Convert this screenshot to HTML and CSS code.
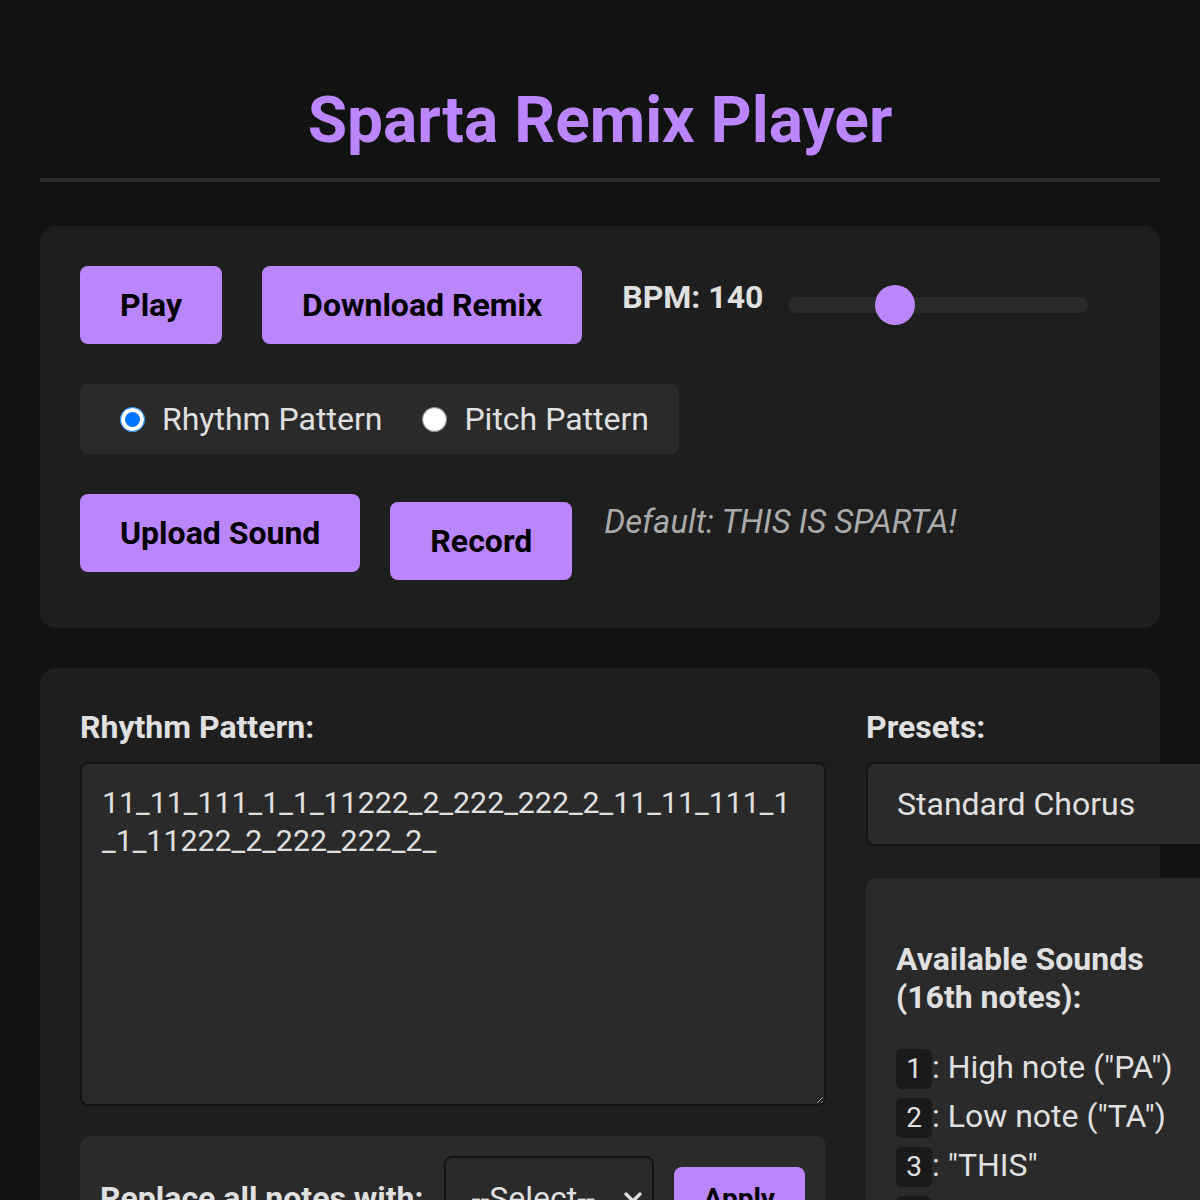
FILE: index.html
```html
<!DOCTYPE html>
<html lang="en">
<head>
<meta charset="utf-8">
<title>Sparta Remix Player</title>
<link rel="stylesheet" href="styles.css">
</head>
<body>
<div class="app">
  <h1 class="title">Sparta Remix Player</h1>

  <section class="panel controls">
    <div class="row-top">
      <button class="btn">Play</button>
      <button class="btn">Download Remix</button>
      <div class="bpm">
        <label class="bpm-label" for="bpm">BPM: 140</label>
        <input id="bpm" class="bpm-slider" type="range" min="60" max="300" value="140">
      </div>
    </div>

    <div class="mode">
      <label class="mode-opt"><input type="radio" name="mode" checked><span>Rhythm Pattern</span></label>
      <label class="mode-opt"><input type="radio" name="mode"><span>Pitch Pattern</span></label>
    </div>

    <div class="row-sound">
      <button class="btn">Upload Sound</button>
      <button class="btn btn-record">Record</button>
      <p class="default-note">Default: THIS IS SPARTA!</p>
    </div>
  </section>

  <section class="panel editor">
    <div class="col-main">
      <label class="field-label" for="pattern">Rhythm Pattern:</label>
      <textarea id="pattern" class="pattern">11_11_111_1_1_11222_2_222_222_2_11_11_111_1_1_11222_2_222_222_2_</textarea>
      <div class="replace">
        <span class="replace-label">Replace all notes with:</span>
        <select class="select select-small">
          <option>--Select--</option>
          <option>1</option>
          <option>2</option>
        </select>
        <button class="btn btn-apply">Apply</button>
      </div>
    </div>

    <div class="col-side">
      <label class="field-label" for="presets">Presets:</label>
      <select id="presets" class="select select-wide">
        <option>Standard Chorus</option>
        <option>Verse</option>
      </select>
      <div class="sounds">
        <h3 class="sounds-title">Available Sounds (16th notes):</h3>
        <ul class="sound-list">
          <li><code class="key">1</code><span>: High note ("PA")</span></li>
          <li><code class="key">2</code><span>: Low note ("TA")</span></li>
          <li><code class="key">3</code><span>: "THIS"</span></li>
          <li><code class="key">4</code><span>: "IS"</span></li>
          <li><code class="key">5</code><span>: "SPARTA"</span></li>
          <li><code class="key">_</code><span>: Rest</span></li>
        </ul>
      </div>
    </div>
  </section>
</div>
</body>
</html>
```

FILE: styles.css
```css
html, body {
  margin: 0;
  padding: 0;
}

body {
  background: #121212;
  color: #e0e0e0;
  font-family: Roboto, "Liberation Sans", sans-serif;
  font-size: 32px;
  overflow-x: hidden;
}

.app {
  padding: 40px;
}

.title {
  margin: 43px 0 44px;
  padding-bottom: 20px;
  border-bottom: 4px solid #2e2e2e;
  text-align: center;
  font-size: 64px;
  font-weight: 700;
  line-height: 75px;
  color: #bb86fc;
}

.panel {
  background: #1e1e1e;
  border-radius: 16px;
  padding: 40px;
  margin-bottom: 40px;
}

.btn {
  background: #bb86fc;
  color: #000;
  border: none;
  border-radius: 8px;
  padding: 20px 40px;
  font-family: inherit;
  font-size: 32px;
  font-weight: 700;
  line-height: 38px;
  cursor: pointer;
}

.row-top {
  display: flex;
  align-items: center;
  gap: 40px;
}

.bpm {
  display: flex;
  align-items: center;
  gap: 25px;
}

.bpm-label {
  font-weight: 700;
  line-height: 38px;
  margin-bottom: 16px;
}

.bpm-slider {
  -webkit-appearance: none;
  appearance: none;
  width: 300px;
  height: 16px;
  margin: 0;
  background: #2a2a2a;
  border-radius: 8px;
  outline: none;
}

.bpm-slider::-webkit-slider-thumb {
  -webkit-appearance: none;
  appearance: none;
  width: 40px;
  height: 40px;
  border-radius: 50%;
  background: #bb86fc;
  border: none;
}

.mode {
  display: inline-flex;
  align-items: center;
  gap: 40px;
  margin-top: 40px;
  padding: 16px 30px 16px 40px;
  background: #2a2a2a;
  border-radius: 8px;
}

.mode-opt {
  display: flex;
  align-items: center;
  gap: 17px;
  line-height: 38px;
}

.mode-opt input {
  width: 25px;
  height: 25px;
  margin: 0;
}

.row-sound {
  display: flex;
  align-items: flex-start;
  margin-top: 40px;
  padding-bottom: 8px;
}

.btn-record {
  margin: 8px 32px 0 30px;
}

.default-note {
  margin: 9px 0 0;
  font-style: italic;
  font-size: 32.8px;
  color: #aaa;
  line-height: 38px;
}

.editor {
  display: grid;
  grid-template-columns: 746px 380px;
  column-gap: 40px;
  align-items: start;
}

.field-label {
  display: block;
  font-weight: 700;
  line-height: 38px;
  margin-bottom: 16px;
}

.pattern {
  display: block;
  box-sizing: border-box;
  width: 746px;
  height: 344px;
  margin: 0 0 30px;
  padding: 20px 32px 20px 20px;
  background: #2a2a2a;
  color: #e0e0e0;
  border: 2px solid #141414;
  border-radius: 8px;
  font-family: inherit;
  font-size: 30.3px;
  line-height: 38px;
  resize: vertical;
  color-scheme: dark;
}

.replace {
  display: flex;
  align-items: center;
  gap: 20px;
  padding: 20px;
  background: #2a2a2a;
  border-radius: 10px;
}

.replace-label {
  flex-shrink: 0;
  white-space: nowrap;
  font-weight: 700;
  line-height: 38px;
}

.select {
  -webkit-appearance: none;
  appearance: none;
  flex-shrink: 0;
  box-sizing: border-box;
  height: 84px;
  padding: 0 40px 0 26px;
  background-color: #2a2a2a;
  background-image: url("data:image/svg+xml,%3Csvg xmlns='http://www.w3.org/2000/svg' width='18' height='12' viewBox='0 0 18 12'%3E%3Cpath d='M2 2 L9 9 L16 2' fill='none' stroke='%23e0e0e0' stroke-width='3.2' stroke-linecap='round' stroke-linejoin='round'/%3E%3C/svg%3E");
  background-repeat: no-repeat;
  background-position: right 10px center;
  background-size: 18px 12px;
  color: #e0e0e0;
  border: 2px solid #141414;
  border-radius: 8px;
  font-family: inherit;
  font-size: 32px;
}

.select-small {
  width: 210px;
}

.select-wide {
  display: block;
  width: 380px;
  padding-left: 29px;
}

.btn-apply {
  flex-shrink: 0;
  padding: 15px 30px;
  font-size: 28px;
  line-height: 33px;
}

.sounds {
  margin-top: 32px;
  padding: 30px;
  background: #2a2a2a;
  border-radius: 10px;
}

.sounds-title {
  margin: 32px 0;
  font-size: 32px;
  font-weight: 700;
  line-height: 38px;
}

.sound-list {
  list-style: none;
  margin: 0;
  padding: 0;
}

.sound-list li {
  display: flex;
  align-items: baseline;
  margin-bottom: 8px;
  line-height: 38px;
}

.key {
  display: block;
  box-sizing: border-box;
  width: 36px;
  padding: 4px 0;
  text-align: center;
  background: #1a1a1a;
  border-radius: 6px;
  font-family: inherit;
  font-size: 28px;
  line-height: 32px;
}
```
